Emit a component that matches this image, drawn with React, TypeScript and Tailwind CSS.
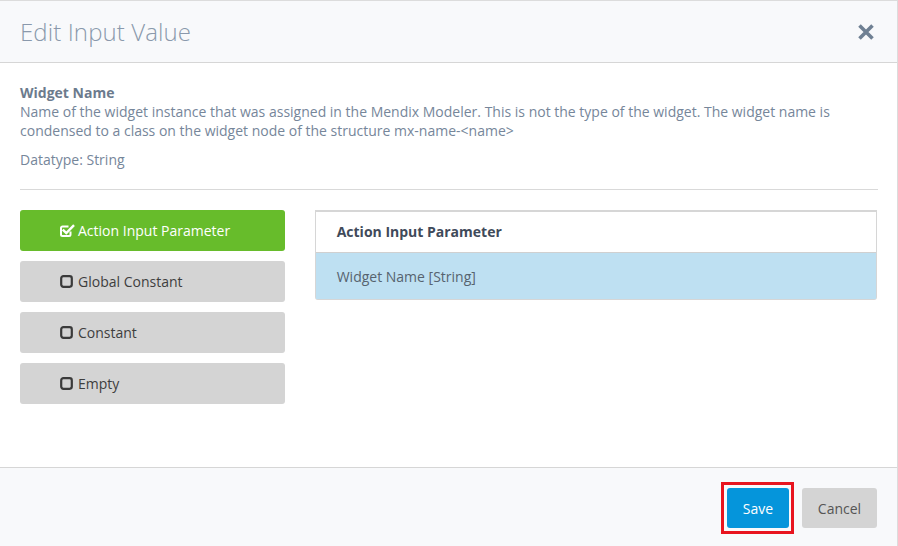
import React from "react";

const CheckSquare = () => (
  <svg width="15" height="14" viewBox="0 0 15 14" className="inline-block">
    <path d="M10.5 7.5 V10.5 A1.5 1.5 0 0 1 9 12 H2.5 A1.5 1.5 0 0 1 1 10.5 V4 A1.5 1.5 0 0 1 2.5 2.5 H8.5" fill="none" stroke="white" strokeWidth="2" />
    <path d="M3.6 6.4 L6.3 9 L13.2 2" fill="none" stroke="white" strokeWidth="2.4" strokeLinecap="square" />
  </svg>
);

const Square = () => (
  <svg width="13" height="13" viewBox="0 0 13 13" className="inline-block">
    <rect x="1.2" y="1.2" width="10.6" height="10.6" rx="2.2" fill="none" stroke="#3a3a3a" strokeWidth="2.2" />
  </svg>
);

export default function App() {
  const options = ["Global Constant", "Constant", "Empty"];
  return (
    <div
      className="w-[898px] h-[546px] bg-white flex flex-col border-t border-r border-[#dcdcdc] overflow-hidden"
      style={{ fontFamily: '"Open Sans", sans-serif' }}
    >
      <div className="h-[62px] bg-[#f8f9fb] border-b border-[#d6d6d6] flex items-center justify-between pl-[20px] pr-[22px] shrink-0">
        <div className="text-[24px] text-[#8a99ac] font-light tracking-[0.1px]">Edit Input Value</div>
        <svg width="18" height="18" viewBox="0 0 18 18">
          <path d="M2.5 2.5 L15.5 15.5 M15.5 2.5 L2.5 15.5" stroke="#6f8093" strokeWidth="3.6" strokeLinecap="butt" />
        </svg>
      </div>
      <div className="flex-1 px-[20px] pt-[20px]">
        <div className="text-[14px] leading-[19px] text-[#76869a]">
          <div className="font-bold text-[#6c7b8d]">Widget Name</div>
          <div className="w-[830px]">
            Name of the widget instance that was assigned in the Mendix Modeler. This is not the type of the widget. The widget name is condensed to a class on the widget node of the structure mx-name-&lt;name&gt;
          </div>
          <div className="mt-[10px]">Datatype: String</div>
        </div>
        <div className="mt-[20px] border-t border-[#d9d9d9] w-[858px]" />
        <div className="flex mt-[20px] gap-[30px]">
          <div className="w-[265px] flex flex-col gap-[10px]">
            <div className="h-[41px] rounded-[3px] bg-[#67bc2b] text-white text-[14px] flex items-center pl-[40px] gap-[3px]">
              <CheckSquare />
              <span>Action Input Parameter</span>
            </div>
            {options.map((o) => (
              <div key={o} className="h-[41px] rounded-[3px] bg-[#d4d4d4] text-[#3e3e3e] text-[14px] flex items-center pl-[40px] gap-[5px]">
                <Square />
                <span>{o}</span>
              </div>
            ))}
          </div>
          <div className="w-[563px] h-[90px] border border-t-2 border-[#d6d6d6] rounded-b-[3px] flex flex-col">
            <div className="h-[41px] border-b border-[#d0d0d0] flex items-center pl-[21px] pb-[2px] text-[14px] font-bold text-[#3f4a5a]">
              Action Input Parameter
            </div>
            <div className="flex-1 bg-[#bee0f2] flex items-center pl-[21px] text-[14px] text-[#56636f]">
              Widget Name [String]
            </div>
          </div>
        </div>
      </div>
      <div className="h-[79px] bg-[#f8f9fb] border-t border-[#d6d6d6] flex items-center justify-end pr-[20px] gap-[8px] shrink-0">
        <div className="border-[3px] border-[#e8141e] pl-[3px] pr-[2px] pt-[3px] pb-[3px] mt-[2px]">
          <div className="w-[62px] h-[40px] rounded-[3px] bg-[#0595db] text-white text-[14px] flex items-center justify-center">
            Save
          </div>
        </div>
        <div className="w-[75px] h-[40px] rounded-[3px] bg-[#d4d4d4] text-[#555] text-[14px] flex items-center justify-center mt-[2px]">
          Cancel
        </div>
      </div>
    </div>
  );
}
